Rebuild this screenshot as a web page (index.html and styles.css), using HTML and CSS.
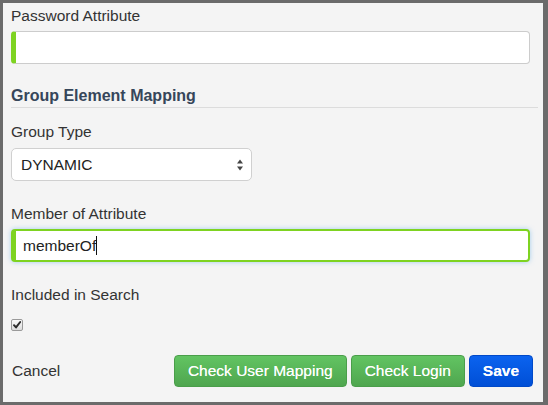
FILE: index.html
```html
<!DOCTYPE html>
<html>
<head>
<meta charset="utf-8">
<link rel="stylesheet" href="styles.css">
</head>
<body>
<div class="panel">
  <div class="field first">
    <label class="label">Password Attribute</label>
    <div class="input required"></div>
  </div>

  <h3 class="section-title">Group Element Mapping</h3>

  <div class="field after-title">
    <label class="label">Group Type</label>
    <div class="select">
      <span>DYNAMIC</span>
      <svg class="arrows" width="8" height="12" viewBox="0 0 8 12"><path d="M4 0.5 L7 4.5 L1 4.5 Z M4 11.5 L7 7.5 L1 7.5 Z" fill="#444"/></svg>
    </div>
  </div>

  <div class="field">
    <label class="label">Member of Attribute</label>
    <div class="input required focused"><span>memberOf</span><span class="caret"></span></div>
  </div>

  <div class="field">
    <label class="label">Included in Search</label>
    <span class="checkbox"><svg width="10" height="10" viewBox="0 0 10 10"><path d="M2 5.2 L4 7.4 L8.2 2" fill="none" stroke="#2b2b2b" stroke-width="2" stroke-linecap="round" stroke-linejoin="round"/></svg></span>
  </div>

  <div class="footer">
    <span class="cancel">Cancel</span>
    <div class="buttons">
      <button class="btn btn-success">Check User Mapping</button>
      <button class="btn btn-success">Check Login</button>
      <button class="btn btn-primary">Save</button>
    </div>
  </div>
</div>
</body>
</html>
```
FILE: styles.css
```css
html, body {
  margin: 0;
  height: 405px;
}
body {
  background: #6b6b6b;
  padding: 3px 5px 3px 3px;
  box-sizing: border-box;
  font-family: "Liberation Sans", Arial, sans-serif;
  font-size: 15.5px;
  color: #333;
}
.panel {
  height: 100%;
  background: #f4f4f4;
  padding: 0 5px 0 8px;
  box-sizing: border-box;
  overflow: hidden;
}
.field {
  margin-top: 23px;
}
.field.first {
  margin-top: 3px;
}
.field.after-title {
  margin-top: 14px;
}
.label {
  display: block;
  line-height: 20px;
  color: #333;
}
.input {
  margin-top: 5px;
  width: calc(100% - 8px);
  height: 33px;
  box-sizing: border-box;
  background: #fff;
  border: 1px solid #ccc;
  border-radius: 4px;
  display: flex;
  align-items: center;
  padding-left: 7px;
  color: #222;
}
.input.required {
  border-left: 5px solid #7ed321;
}
.input.focused {
  border: 2px solid #7ed321;
  border-left-width: 5px;
  padding-left: 7px;
  box-shadow: 0 0 5px rgba(102, 175, 233, 0.55);
}
.caret {
  display: inline-block;
  width: 1px;
  height: 19px;
  background: #111;
}
.section-title {
  margin: 22px 0 0;
  font-size: 16px;
  font-weight: bold;
  line-height: 20px;
  color: #36465a;
  padding-bottom: 1px;
  border-bottom: 1px solid #dcdcdc;
}
.select {
  margin-top: 6px;
  width: 241px;
  height: 33px;
  box-sizing: border-box;
  background: #fff;
  border: 1px solid #d0d0d0;
  border-radius: 5px;
  display: flex;
  align-items: center;
  justify-content: space-between;
  padding: 0 7px 0 9px;
  color: #222;
}
.arrows {
  display: block;
}
.checkbox {
  margin-top: 14px;
  width: 12px;
  height: 12px;
  box-sizing: border-box;
  border: 1px solid #9a9a9a;
  border-radius: 2px;
  background: linear-gradient(#fafafa, #dcdcdc);
  display: flex;
  align-items: center;
  justify-content: center;
}
.checkbox svg {
  display: block;
}
.footer {
  margin-top: 24px;
  display: flex;
  align-items: center;
  justify-content: space-between;
  padding: 0 5px 0 1px;
}
.cancel {
  color: #333;
}
.buttons {
  display: flex;
  gap: 4px;
}
.btn {
  font-family: inherit;
  font-size: 15.5px;
  height: 32px;
  line-height: 30px;
  border-radius: 4px;
  color: #fff;
  cursor: pointer;
  text-shadow: 0 0 0.6px rgba(255,255,255,0.8);
}
.btn-success {
  background: linear-gradient(#62c462, #4fa64f);
  border: 1px solid #4a9e4a;
  padding: 0 13px;
}
.btn-primary {
  background: linear-gradient(#0b63ef, #004fd6);
  border: 1px solid #0049c8;
  padding: 0 13px;
  font-weight: bold;
}
```
